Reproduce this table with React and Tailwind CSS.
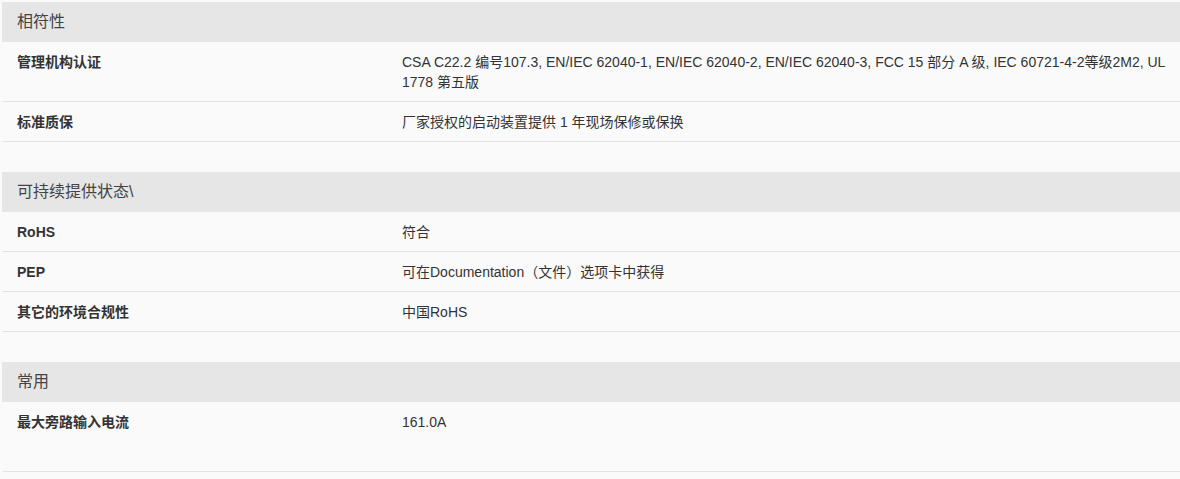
const sections = [
  {
    title: "相符性",
    rows: [
      {
        label: "管理机构认证",
        value:
          "CSA C22.2 编号107.3, EN/IEC 62040-1, EN/IEC 62040-2, EN/IEC 62040-3, FCC 15 部分 A 级, IEC 60721-4-2等级2M2, UL 1778 第五版",
      },
      { label: "标准质保", value: "厂家授权的启动装置提供 1 年现场保修或保换" },
    ],
  },
  {
    title: "可持续提供状态\\",
    rows: [
      { label: "RoHS", value: "符合" },
      { label: "PEP", value: "可在Documentation（文件）选项卡中获得" },
      { label: "其它的环境合规性", value: "中国RoHS" },
    ],
  },
  {
    title: "常用",
    rows: [{ label: "最大旁路输入电流", value: "161.0A", tall: true }],
  },
];

function SpecRow({ row }) {
  return (
    <div
      className={
        "grid grid-cols-[399px_1fr] ml-px border-b border-[#e3e3e3] text-[14px] leading-5 text-[#333] pt-[10px] " +
        (row.tall ? "pb-[39px]" : "pb-[9px]")
      }
    >
      <div className="pl-[14px] font-bold">{row.label}</div>
      <div className="pr-[14px]">{row.value}</div>
    </div>
  );
}

function Section({ section }) {
  return (
    <div className="mb-[30px]">
      <div className="h-10 flex items-center bg-[#e6e6e6] pl-[15px] text-base text-[#444]">
        {section.title}
      </div>
      {section.rows.map((row) => (
        <SpecRow key={row.label} row={row} />
      ))}
    </div>
  );
}

export default function App() {
  return (
    <div
      className="min-h-[479px] bg-[#fafafa] pt-[2px] pl-[2px]"
      style={{ fontFamily: '"Liberation Sans", Arial, "Noto Sans CJK SC", sans-serif' }}
    >
      {sections.map((s) => (
        <Section key={s.title} section={s} />
      ))}
    </div>
  );
}
